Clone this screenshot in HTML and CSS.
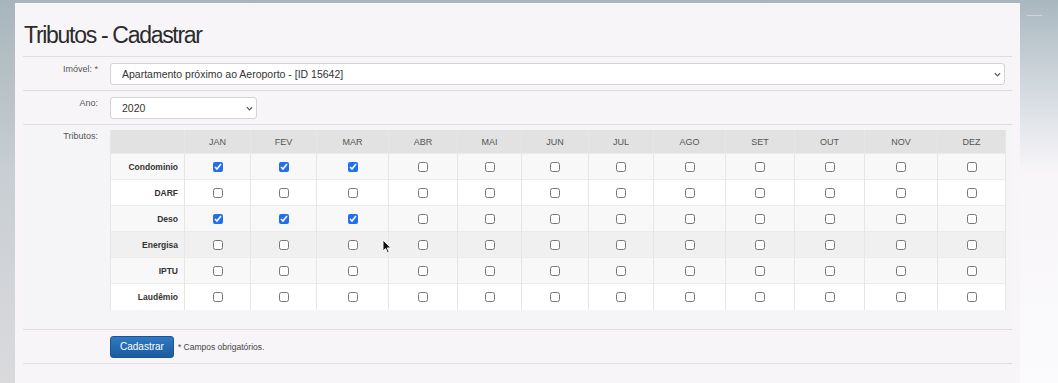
FILE: index.html
```html
<!DOCTYPE html>
<html lang="pt-BR">
<head>
    <meta charset="UTF-8">
    <meta name="viewport" content="width=device-width, initial-scale=1.0">
    <title>Tributos - Cadastrar</title>
    <link rel="stylesheet" href="styles.css">
</head>
<body>
    <div class="page">
        <!-- painel principal -->
        <div class="panel">
            <h1 class="title">Tributos - Cadastrar</h1>

            <form class="form">
                <div class="form-row">
                    <label class="form-label">Imóvel: *</label>
                    <div class="form-field">
                        <div class="select-wrap select-wide">
                            <select class="select">
                                <option>Apartamento próximo ao Aeroporto - [ID 15642]</option>
                            </select>
                            <svg class="chevron" viewBox="0 0 8 5"><path d="M1 1l3 3 3-3"/></svg>
                        </div>
                    </div>
                </div>

                <div class="form-row">
                    <label class="form-label">Ano:</label>
                    <div class="form-field">
                        <div class="select-wrap select-small">
                            <select class="select">
                                <option>2020</option>
                            </select>
                            <svg class="chevron" viewBox="0 0 8 5"><path d="M1 1l3 3 3-3"/></svg>
                        </div>
                    </div>
                </div>

                <div class="form-row row-tributos">
                    <label class="form-label">Tributos:</label>
                    <div class="form-field">
                        <table class="tributos">
                            <colgroup>
                                <col class="col-nome">
                                <col class="w66"><col class="w66"><col class="w72"><col class="w69">
                                <col class="w64"><col class="w67"><col class="w65"><col class="w72">
                                <col class="w69"><col class="w70"><col class="w73"><col class="w68">
                            </colgroup>
                            <thead>
                                <tr id="meses"><th></th></tr>
                            </thead>
                            <tbody id="linhas"></tbody>
                        </table>
                    </div>
                </div>

                <div class="form-row">
                    <span class="form-label"></span>
                    <div class="form-field actions">
                        <button type="button" class="btn">Cadastrar</button>
                        <span class="hint">* Campos obrigatórios.</span>
                    </div>
                </div>
            </form>

            <!-- ponteiro do mouse -->
            <svg class="cursor" viewBox="0 0 10 15">
                <path d="M1 1v11l2.6-2.5 1.9 4.3 1.6-.7-1.9-4.2H8.8z" fill="#111" stroke="#fff" stroke-width="0.9"/>
            </svg>
        </div>

        <div class="side"><span class="side-dash"></span></div>
    </div>

    <script>
        // meses do ano
        const meses = ['JAN', 'FEV', 'MAR', 'ABR', 'MAI', 'JUN', 'JUL', 'AGO', 'SET', 'OUT', 'NOV', 'DEZ'];

        // tributos e meses já marcados
        const tributos = [
            { nome: 'Condominio', marcados: [0, 1, 2] },
            { nome: 'DARF', marcados: [] },
            { nome: 'Deso', marcados: [0, 1, 2] },
            { nome: 'Energisa', marcados: [], hover: true },
            { nome: 'IPTU', marcados: [] },
            { nome: 'Laudêmio', marcados: [] }
        ];

        const cabecalho = document.getElementById('meses');
        meses.forEach(mes => {
            const th = document.createElement('th');
            th.textContent = mes;
            cabecalho.appendChild(th);
        });

        const corpo = document.getElementById('linhas');
        tributos.forEach(t => {
            const tr = document.createElement('tr');
            if (t.hover) tr.className = 'is-hover';

            const th = document.createElement('th');
            th.textContent = t.nome;
            tr.appendChild(th);

            meses.forEach((mes, i) => {
                const td = document.createElement('td');
                const check = document.createElement('input');
                check.type = 'checkbox';
                check.checked = t.marcados.includes(i);
                td.appendChild(check);
                tr.appendChild(td);
            });

            corpo.appendChild(tr);
        });
    </script>
</body>
</html>
```

FILE: styles.css
```css
/* fundo da janela */
body {
    margin: 0;
    height: 383px;
    overflow: hidden;
    font-family: "Liberation Sans", Arial, sans-serif;
    color: #333;
    background: linear-gradient(#a8b5bd, #c8ced3 45%, #dadadd);
}

.page {
    display: flex;
    height: 100%;
    padding-left: 15px;
}

/* painel claro */
.panel {
    position: relative;
    width: 1005px;
    margin-top: 3px;
    padding: 0 8px;
    box-sizing: border-box;
    background-color: #f8f5f9;
}

/* faixa da direita */
.side {
    flex: 1;
    position: relative;
    background: linear-gradient(#a9b7bf, #dfe3e8 30%, #f7f5f8 45%, #fbfafc);
}

.side-dash {
    position: absolute;
    left: 7px;
    top: 15px;
    width: 15px;
    height: 1px;
    background-color: #cfd7dc;
}

.title {
    margin: 0;
    padding: 18px 1px 7px;
    font-size: 23px;
    line-height: 28px;
    font-weight: normal;
    letter-spacing: -1.3px;
    color: #2b2b2b;
    border-bottom: 1px solid #e0dce1;
}

/* linhas do formulário */
.form-row {
    display: flex;
    padding: 6px 0 5px;
    border-bottom: 1px solid #e0dce1;
}

.form-label {
    width: 75px;
    flex-shrink: 0;
    padding-top: 1px;
    text-align: right;
    font-size: 9px;
    line-height: 11px;
    color: #555;
}

.form-field {
    flex: 1;
    margin: 0 7px 0 12px;
}

.row-tributos {
    padding: 5px 0 19px;
    background-color: #f5f4f6;
}

/* selects */
.select-wrap {
    position: relative;
}

.select-small {
    width: 147px;
}

.select {
    display: block;
    width: 100%;
    height: 22px;
    padding: 0 20px 0 11px;
    border: 1px solid #d5d3d6;
    border-radius: 3px;
    background-color: #fff;
    font-family: inherit;
    font-size: 10.5px;
    color: #333;
    appearance: none;
    outline: none;
}

.chevron {
    position: absolute;
    right: 4px;
    top: 9px;
    width: 7px;
    height: 5px;
    fill: none;
    stroke: #555;
    stroke-width: 1.4;
}

/* tabela de tributos */
.tributos {
    width: 896px;
    border-collapse: collapse;
    table-layout: fixed;
    font-size: 9px;
}

.col-nome { width: 74px; }
.w64 { width: 64px; }
.w65 { width: 65px; }
.w66 { width: 66px; }
.w67 { width: 67px; }
.w68 { width: 68px; }
.w69 { width: 69px; }
.w70 { width: 70px; }
.w72 { width: 72px; }
.w73 { width: 73px; }

.tributos th,
.tributos td {
    padding: 0;
    text-align: center;
    border-left: 1px solid #e6e6e6;
    border-right: 1px solid #e6e6e6;
}

.tributos thead th {
    height: 23px;
    background-color: #e2e2e2;
    font-weight: normal;
    color: #555;
}

.tributos tbody tr {
    height: 26px;
    border-top: 1px solid #ececec;
    background-color: #fff;
}

.tributos tbody tr:nth-child(odd) {
    background-color: #f8f8f8;
}

.tributos tbody tr.is-hover {
    background-color: #f0f0f0;
}

.tributos tbody th {
    padding-right: 6px;
    text-align: right;
    font-size: 8.5px;
    font-weight: bold;
    color: #333;
}

.tributos input {
    width: 10px;
    height: 10px;
    margin: 0;
    vertical-align: middle;
    accent-color: #1f6ff0;
}

/* botão */
.actions {
    display: flex;
    align-items: center;
    gap: 4px;
}

.btn {
    height: 22px;
    padding: 0 9px;
    border: 1px solid #1b5490;
    border-radius: 3px;
    background: linear-gradient(#3079c2, #1a5ba0);
    color: #fff;
    font-family: inherit;
    font-size: 10px;
    cursor: pointer;
}

.hint {
    font-size: 8.5px;
    color: #444;
}

.cursor {
    position: absolute;
    left: 367px;
    top: 236px;
    width: 10px;
    height: 15px;
}
```
